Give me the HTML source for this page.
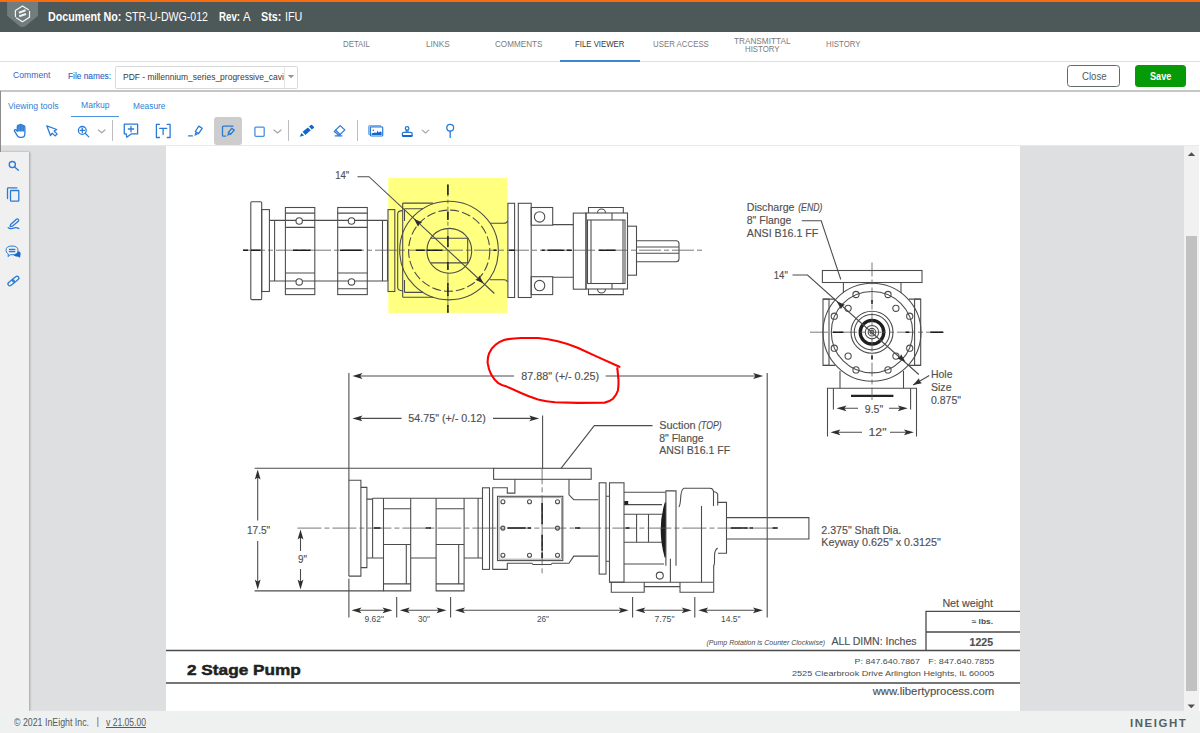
<!DOCTYPE html>
<html lang="en"><head><meta charset="utf-8"><title>Document STR-U-DWG-012 - File Viewer</title>
<style>
*{box-sizing:border-box}
html,body{margin:0;padding:0}
body{width:1200px;height:733px;overflow:hidden;background:#fff;font-family:"Liberation Sans",sans-serif;position:relative}
.t{position:absolute;white-space:nowrap;line-height:1;transform-origin:0 50%}
.abs{position:absolute}
#orange{left:0;top:0;width:1200px;height:2px;background:#f96c10}
#hdr{left:0;top:2px;width:1200px;height:30px;background:#4d5859}
#tabs{left:0;top:32px;width:1200px;height:30px;background:#fff;border-bottom:1px solid #dedede}
#tabline{left:560px;top:60px;width:80px;height:2px;background:#3f86d2}
#frameTop{left:0;top:90px;width:1200px;height:1.9px;background:#c6c6c6}
#frameLeft{left:0;top:91px;width:1px;height:61px;background:#8c8c8c}
#sel{left:115px;top:65.7px;width:182.6px;height:22.9px;border:1.2px solid #d9d9d9;border-radius:1.8px;background:#fff}
#selDiv{left:284.2px;top:66.9px;width:1px;height:21px;background:#e6e6e6}
#btnClose{left:1067px;top:65px;width:53px;height:22px;border:1px solid #5d6b6b;border-radius:3.5px;background:#fff}
#btnSave{left:1134.6px;top:65px;width:51px;height:22px;border-radius:3.5px;background:#069a06}
#mkline{left:71px;top:115.5px;width:48px;height:1.6px;background:#4a92e0}
#tbline{left:0;top:145px;width:1200px;height:1px;background:#e9e9e9}
#selTool{left:213.7px;top:116.8px;width:28.2px;height:28.3px;border-radius:3px;background:#cdcdcd}
.sep{position:absolute;width:1px;top:120.3px;height:21px;background:#bdbdbd}
#viewer{left:0;top:146px;width:1200px;height:565px;background:#dddfe0}
#side{left:0;top:152px;width:28.6px;height:559px;background:#f0f0f0;box-shadow:1px 0 2px rgba(0,0,0,.28)}
#page{left:166px;top:146px;width:854px;height:565.3px;background:#fff}
#sbar{left:1184px;top:146px;width:15px;height:565px;background:#f1f1f1}
#sthumb{left:1186px;top:236px;width:11.3px;height:455px;background:#c1c1c1}
#rstrip{left:1199px;top:92px;width:1px;height:619px;background:#fff}
#foot{left:0;top:711px;width:1200px;height:22px;background:#eff1f1}
svg{position:absolute;left:0;top:0;overflow:visible}
.ln{fill:none;stroke:#4c4c4c;stroke-width:1.08}
.cl{fill:none;stroke:#555;stroke-width:.8}
.cb{stroke:#1c1c1c;stroke-width:1.5}
.ah{fill:#2e2e2e;stroke:none}
.dt{font-family:"Liberation Sans",sans-serif;font-size:10.6px;fill:#505050;stroke:#505050;stroke-width:.15px}
.ds{font-family:"Liberation Sans",sans-serif;font-size:8px;fill:#4a4a4a}
.dm{font-family:"Liberation Sans",sans-serif;font-size:9.2px;fill:#4a4a4a}
.ic{fill:none;stroke:#2b7bd6;stroke-width:1.3;stroke-linecap:round;stroke-linejoin:round}
.icf{fill:#2b7bd6;stroke:none}
.chev{fill:none;stroke:#a6a6a6;stroke-width:1.2;stroke-linecap:round;stroke-linejoin:round}
</style></head>
<body>
<div class="abs" id="orange"></div><div class="abs" id="hdr"></div>
<span class="t" style="left:48.30px;top:10.40px;font-size:13px;color:#fff;transform:scaleX(0.8269);font-weight:700;">Document No:</span>
<span class="t" style="left:125.00px;top:10.40px;font-size:13px;color:#fff;transform:scaleX(0.8150);">STR-U-DWG-012</span>
<span class="t" style="left:219.30px;top:10.40px;font-size:13px;color:#fff;transform:scaleX(0.7453);font-weight:700;">Rev:</span>
<span class="t" style="left:243.40px;top:10.40px;font-size:13px;color:#fff;transform:scaleX(0.8765);">A</span>
<span class="t" style="left:261.30px;top:10.40px;font-size:13px;color:#fff;transform:scaleX(0.8266);font-weight:700;">Sts:</span>
<span class="t" style="left:284.70px;top:10.40px;font-size:13px;color:#fff;transform:scaleX(0.8261);">IFU</span>
<div class="abs" id="tabs"></div><div class="abs" id="tabline"></div>
<span class="t" style="left:343.20px;top:39.34px;font-size:9.4px;color:#7b7b7b;transform:scaleX(0.8351);">DETAIL</span>
<span class="t" style="left:426.10px;top:39.34px;font-size:9.4px;color:#7b7b7b;transform:scaleX(0.8761);">LINKS</span>
<span class="t" style="left:495.20px;top:39.34px;font-size:9.4px;color:#7b7b7b;transform:scaleX(0.8663);">COMMENTS</span>
<span class="t" style="left:575.20px;top:39.34px;font-size:9.4px;color:#3a3a3a;transform:scaleX(0.8330);">FILE VIEWER</span>
<span class="t" style="left:652.80px;top:39.34px;font-size:9.4px;color:#7b7b7b;transform:scaleX(0.8375);">USER ACCESS</span>
<span class="t" style="left:734.10px;top:35.94px;font-size:9.4px;color:#7b7b7b;transform:scaleX(0.8764);">TRANSMITTAL</span>
<span class="t" style="left:744.50px;top:43.94px;font-size:9.4px;color:#7b7b7b;transform:scaleX(0.8373);">HISTORY</span>
<span class="t" style="left:825.90px;top:39.34px;font-size:9.4px;color:#7b7b7b;transform:scaleX(0.8349);">HISTORY</span>
<span class="t" style="left:12.90px;top:69.74px;font-size:9.4px;color:#3d5fc2;transform:scaleX(0.9204);">Comment</span>
<span class="t" style="left:67.70px;top:71.58px;font-size:9px;color:#2a60c8;transform:scaleX(0.9244);-webkit-text-stroke:.1px #2a60c8;">File names:</span>
<div class="abs" id="sel"></div><div class="abs" id="selDiv"></div>
<span class="t" style="left:123.00px;top:72.04px;font-size:9.4px;color:#3a3a3a;transform:scaleX(0.9049);">PDF - millennium_series_progressive_cavi</span>
<div class="abs" id="btnClose"></div><div class="abs" id="btnSave"></div>
<span class="t" style="left:1081.60px;top:72.03px;font-size:10px;color:#4d5b5b;transform:scaleX(0.9622);">Close</span>
<span class="t" style="left:1149.60px;top:72.03px;font-size:10px;color:#fff;transform:scaleX(0.9163);font-weight:700;">Save</span>
<div class="abs" id="frameTop"></div>
<span class="t" style="left:8.00px;top:101.61px;font-size:9.2px;color:#2f7fd3;transform:scaleX(0.9382);">Viewing tools</span>
<span class="t" style="left:80.70px;top:100.61px;font-size:9.2px;color:#2f7fd3;transform:scaleX(0.9323);">Markup</span>
<span class="t" style="left:133.00px;top:101.61px;font-size:9.2px;color:#2f7fd3;transform:scaleX(0.9080);">Measure</span>
<div class="abs" id="mkline"></div><div class="abs" id="selTool"></div>
<div class="sep" style="left:112.2px"></div>
<div class="sep" style="left:288.3px"></div>
<div class="sep" style="left:357.2px"></div>
<div class="abs" id="tbline"></div>
<div class="abs" id="viewer"></div><div class="abs" id="page"></div><div class="abs" id="side"></div>
<div class="abs" id="sbar"></div><div class="abs" id="sthumb"></div><div class="abs" id="rstrip"></div>
<div class="abs" id="frameLeft"></div>
<div class="abs" id="foot"></div>
<span class="t" style="left:14.00px;top:717.53px;font-size:10px;color:#555b5b;transform:scaleX(0.8803);">© 2021 InEight Inc.</span>
<span class="t" style="left:96.50px;top:717.13px;font-size:10px;color:#8a5a6a;transform:scaleX(1.0000);">|</span>
<span class="t" style="left:105.50px;top:717.53px;font-size:10px;color:#555b5b;transform:scaleX(0.8564);text-decoration:underline;">v 21.05.00</span>
<span class="t" style="left:1130.00px;top:718.60px;font-size:10.4px;color:#566060;transform:scaleX(1.1043);font-weight:700;letter-spacing:1.4px;">INEIGHT</span>
<svg width="1200" height="733" viewBox="0 0 1200 733">
<!-- ===== HEADER LOGO ===== -->
<path d="M7.1 2H38V15.8L25.6 25.9Q22.5 28.2 19.4 25.9L7.1 15.8Z" fill="#707c7d"/>
<g fill="none" stroke="#f4f6f6" stroke-width="1.25" stroke-linecap="round" stroke-linejoin="round">
<path d="M28.4 9.7L22.45 6L15.4 10.5V16.5M16.5 18L22.45 21.7L29.5 17.2V11.3"/>
<path d="M18.9 12.7L25.6 10.3M19.2 16.3L26 14.1" stroke-width="2.1" stroke-linecap="butt" stroke="#eef1f1"/>
</g>
<!-- ===== SELECT ARROW ===== -->
<path d="M287.8 75H294.2L291 78.3Z" fill="#959595"/>
<!-- ===== TOOLBAR ICONS ===== -->
<!-- hand -->
<path d="M17.3 125.6H24.9V131H17.3Z" fill="#2b7bd6" fill-opacity=".38"/>
<path class="ic" d="M17.3 131.2V126.5Q17.3 125.3 18.6 125.2L19.5 124.7Q20.3 124.2 21 124.6L23.6 125.6Q24.9 126 24.9 127.3V133.5Q24.9 137.4 21.5 137.4H20Q18.2 137.4 17.3 135.6L14.4 130.9Q14.2 129.9 15.1 129.6Q15.8 129.4 16.3 130.1Z" stroke-width="1.15"/>
<path class="ic" d="M18.8 125.6V131M20.3 124.8V131M21.8 125.2V131M23.3 125.8V131" stroke-width=".7"/>
<!-- cursor -->
<path class="ic" d="M46.8 125.8L56.7 129.5L54.1 131L57.2 134.1L55 135.9L52.2 133.1L50.5 135.6Z" stroke-width="1.15"/>
<!-- zoom -->
<circle class="ic" cx="82.3" cy="130.4" r="3.9" stroke-width="1.1"/>
<path class="ic" d="M85.2 133.3L88.8 136.9" stroke-width="1.3"/>
<path class="ic" d="M80.3 130.4H84.4" stroke-width="1.4" stroke="#1a6bd3"/>
<path class="ic" d="M82.3 128.2V132.6" stroke-width=".6"/>
<path class="chev" d="M98.4 130L101.7 132.8L104.9 130"/>
<!-- comment plus -->
<path class="ic" d="M124.3 124.2H137.6V133.9H131.2L126.7 137.2L126.3 133.9H124.3Z"/>
<path class="ic" d="M128.3 129H133.7M131 126.3V131.7" stroke="#1a6bd3" stroke-width="1.5" stroke-linecap="butt"/>
<!-- [T] -->
<path class="ic" d="M159.5 124.4H156.4V137.5H159.5M167.2 124.4H170.1V137.5H167.2" stroke-linecap="butt" stroke-linejoin="miter"/>
<path class="ic" d="M159.6 128.3H166.8M163.1 128.3V134.6" stroke="#1565d0" stroke-width="1.9" stroke-linecap="butt"/>
<!-- highlighter -->
<path class="ic" d="M188.6 135.9H192.4" stroke-width="1.4" stroke-linecap="butt"/>
<path class="ic" d="M198.8 126.1L202.2 128.3L198.6 133.6L195.3 131.5Z" stroke-width="1.1"/>
<path class="icf" d="M195.2 132.3L198.1 134.2L194.4 135.9Z"/>
<!-- selected: note w/ pen -->
<path class="ic" d="M233 126.1H223.4Q222.5 126.1 222.5 127V135.2Q222.5 136.1 223.4 136.1H225.7" stroke-width="1.2"/>
<path class="ic" d="M231.7 128.3L234.3 130L230.6 134.2L228.3 132.5Z" stroke-width="1.1"/>
<path class="icf" d="M228.1 132.7L230.3 134.5L227 135.9Z"/>
<!-- rectangle -->
<rect x="254.9" y="127.1" width="9.3" height="9.2" rx="1" fill="#fff" stroke="#4a8fe0" stroke-width="1.3"/>
<path class="chev" d="M274 130L277.5 133L281 130"/>
<!-- pencil (filled) -->
<g fill="#0f65d0">
<path d="M299.7 136.8L301.5 133L304.1 135.6Z"/>
<path d="M302.6 131.8L307.9 127.5L310.7 130.3L305.4 134.9Z"/>
<path d="M309 126.6L310.9 125Q311.6 124.5 312.3 125.2L313.8 126.7Q314.4 127.4 313.8 128L311.8 129.5Z"/>
</g>
<!-- eraser -->
<path class="ic" d="M340.2 125.6L344.8 129.9L339 135.6L334.3 131.4Z" stroke-width="1.1"/>
<path class="ic" d="M335.6 130.2L340.2 134.4" stroke-width="1"/>
<path class="ic" d="M335.2 135.8H342" stroke-width="1.3" stroke-linecap="butt"/>
<!-- image -->
<rect x="368.6" y="125.6" width="12.6" height="9.2" rx=".8" fill="#a6c9ef" stroke="#5b9be3" stroke-width=".8"/>
<rect x="370.5" y="127" width="12.2" height="9" rx=".8" fill="#fff" stroke="#2b7bd6" stroke-width="1.2"/>
<path d="M371.6 134.9V133.6L374.8 132.4L376.6 133L377.4 130.4L378.6 132.6L380.4 131.4L381.6 132V134.9Z" fill="#1565d0"/>
<circle cx="373.3" cy="130.3" r=".8" fill="#1565d0"/>
<!-- stamp -->
<circle class="ic" cx="407.1" cy="128.4" r="1.8" stroke-width="1.1"/>
<path class="ic" d="M406.3 130.2V132.3M407.9 130.2V132.3" stroke-width=".9"/>
<path class="ic" d="M402.4 135.2V133.4Q402.4 132.3 403.5 132.3H411Q412.1 132.3 412.1 133.4V135.2" stroke-width="1.1"/>
<path d="M402 135H412.6V136Q412.6 136.9 411.6 136.9H403Q402 136.9 402 136Z" fill="#1565d0"/>
<path class="chev" d="M422.2 130.1L425.5 133L428.8 130.1"/>
<!-- pin -->
<circle class="ic" cx="450.2" cy="127.8" r="3.4" stroke-width="1.2" stroke="#3f88dd"/>
<path class="ic" d="M450.2 131.2V137.6" stroke-width="1.2" stroke="#3f88dd"/>
<!-- ===== SIDEBAR ICONS ===== -->
<circle class="ic" cx="12.3" cy="164.6" r="3.1" stroke-width="1.1"/>
<path class="ic" d="M14.6 166.9L18.4 170.3" stroke-width="1.2"/>
<path class="ic" d="M16.8 187.9H8.3Q7.5 187.9 7.5 188.7V198.5" stroke-width="1" stroke="#4a8fe0"/>
<rect class="ic" x="10.5" y="190.5" width="8.3" height="10.6" rx=".6" stroke-width="1.2"/>
<path class="ic" d="M10.6 224.4L16.4 219.2Q17.4 218.5 18.3 219.4Q19.1 220.4 18.3 221.3L12.4 226.2L10.2 226.6Z" stroke-width="1"/>
<path class="ic" d="M8.2 227.6Q9.5 229.2 12.5 228.3Q16.5 226.8 18.8 228.6" stroke-width="1"/>
<path d="M14 252.5Q17.5 251 19.6 251.6Q21.2 253.5 20.3 255.5L20 257.8L17.8 256.6Q15.5 256.8 13.8 255.5Z" fill="#1565d0"/>
<path d="M12 246Q18 246 18 250.4Q18 254.8 12 254.8Q11 254.8 10.3 254.7L8 256.6L8.4 254Q6 252.8 6 250.4Q6 246 12 246Z" fill="#f0f0f0" stroke="#2b7bd6" stroke-width="1"/>
<path class="ic" d="M9.4 249.4H14.8M9.4 251.5H14.8" stroke-width=".8"/>
<g class="ic" stroke-width="1.2">
<rect x="-3.6" y="-1.9" width="7.2" height="3.8" rx="1.9" transform="translate(11.2 282.8) rotate(-39)"/>
<rect x="-3.6" y="-1.9" width="7.2" height="3.8" rx="1.9" transform="translate(15.6 279.2) rotate(-39)"/>
</g>
<!-- scrollbar arrows -->
<path d="M1187.8 156L1191.5 152.2L1195.2 156Z" fill="#505050"/>
<path d="M1187.6 704.5L1191.3 708.3L1195 704.5Z" fill="#505050"/>

<!-- ===== TOP VIEW (upper-left drawing) ===== -->
<rect x="388.3" y="177.9" width="118.8" height="135" fill="#ffff80" stroke="none"/>
<g class="ln">
<!-- left flange + step -->
<rect x="250.8" y="201.7" width="10.9" height="97.9" rx="1"/>
<rect x="261.7" y="209.6" width="7.7" height="81.9"/>
<!-- shaft tube -->
<path d="M269.4 220.4H387.5M269.4 281H387.5M274.6 220.4V281M382.5 220.4V281M387.5 220.4V281"/>
<!-- bearing blocks -->
<rect x="285.4" y="207.5" width="29.4" height="87.1"/>
<path d="M285.4 213.1H314.8M285.4 288.8H314.8M285.4 227.4H314.8M285.4 273H314.8"/>
<circle cx="299.2" cy="221" r="3.2" fill="#fff"/><circle cx="299.2" cy="281.9" r="3.2" fill="#fff"/>
<rect x="337.7" y="207.5" width="29.6" height="87.1"/>
<path d="M337.7 213.1H367.3M337.7 288.8H367.3M337.7 227.4H367.3M337.7 273H367.3"/>
<circle cx="351.5" cy="221" r="3.2" fill="#fff"/><circle cx="351.5" cy="281.9" r="3.2" fill="#fff"/>
<!-- plate before housing -->
<rect x="388" y="209.6" width="6.8" height="81.9"/>
<!-- housing left -->
<path d="M402.7 203.1H433M402.7 297.2H433M402.7 203.1V297.2M404.5 208.8H423M404.5 292.4H423M404.5 208.8V221M404.5 280V292.4"/>
<path d="M402.5 210.6Q397.7 210.6 397.7 214V287Q397.7 290.8 402.5 290.8"/>
<!-- circles -->
<circle cx="449" cy="250.6" r="49.3"/>
<circle cx="449.2" cy="250.7" r="40.6" stroke-dasharray="9 3"/>
<circle cx="449.3" cy="250.8" r="22.4"/>
<path d="M431 238.3H467.7V262.9H431"/>
<!-- outlet nubs -->
<path d="M490 223.2H504Q507 223.2 507.6 220.8M490 279.7H504Q507 279.7 507.6 282.2"/>
<!-- plates right of housing -->
<rect x="507.9" y="203.3" width="6.7" height="94.2"/>
<rect x="518.3" y="203.3" width="12.9" height="94.2"/>
<!-- lugs -->
<rect x="531.2" y="207.5" width="21.5" height="17.7"/><circle cx="539.6" cy="216.9" r="5.2"/>
<rect x="531.2" y="276.7" width="21.5" height="17.9"/><circle cx="539.6" cy="285.6" r="5.2"/>
<path d="M552.7 224.6H573.3M552.7 277.3H573.3"/>
<rect x="573.3" y="213.1" width="12.7" height="76.1"/>
<!-- gearbox -->
<rect x="586" y="213" width="41.5" height="76"/>
<rect x="587.5" y="220" width="37.5" height="63.5"/>
<path d="M591 220V283.5M623 220V283.5"/>
<path d="M588.5 213V207.5H623.3V213M588.5 289V294.6H623.3V289"/>
<path d="M612 213V220M612 283.5V289"/>
<path d="M597.5 213A4 4 0 0 1 605.5 213M597.5 289A4 4 0 0 0 605.5 289"/>
<rect x="627.5" y="226.2" width="9" height="49"/>
<path d="M636.5 240.8H676Q679 240.8 679 243.8V258.7Q679 261.7 676 261.7H636.5M636.5 247H679M636.5 253.3H679"/>
</g>
<g class="cl">
<path d="M243 250.2H705" stroke-dasharray="22 3 5 3"/>
<path class="cb" d="M243 250.2H248M251 250.2H260.6M293 250.2H310.6M339.8 250.2H361.7M415.8 250.2H424.8M427 250.2H442.5M493.5 250.2H496.7M509 250.2H514.6M541.7 250.2H544.8M547.5 250.2H564.6M566.7 250.2H571.9M599 250.2H615.6"/>
<path d="M447.9 184.6V312.7" stroke-dasharray="12 3 4 3"/>
<path class="cb" d="M447.9 184.6V195M447.9 211.7V220M447.9 236V247M447.9 262V270M447.9 283V296M447.9 305V312.7"/>
</g>
<!-- 14" leader -->
<g class="ln"><path d="M357.5 176.7H369L494.4 293.5"/></g>
<text class="dt" x="335.2" y="179.4" textLength="14" lengthAdjust="spacingAndGlyphs">14"</text>

<!-- ===== DISCHARGE END VIEW ===== -->
<g class="ln">
<rect x="822.4" y="270.5" width="99.6" height="12"/>
<path d="M843.4 282.5V293M901 282.5V293"/>
<rect x="823" y="299.1" width="6" height="66.3"/><rect x="914.6" y="299.1" width="6.1" height="66.3"/>
<path d="M823 299.1H835M823 365.4H835M920.7 299.1H909M920.7 365.4H909"/>
<circle cx="872" cy="332.2" r="49"/>
<circle cx="872" cy="332.2" r="40.7"/>
<circle cx="909.7" cy="348.2" r="3.1"/><circle cx="888.0" cy="369.9" r="3.1"/><circle cx="856.0" cy="369.9" r="3.1"/><circle cx="834.3" cy="348.2" r="3.1"/><circle cx="834.3" cy="316.2" r="3.1"/><circle cx="856.0" cy="294.5" r="3.1"/><circle cx="888.0" cy="294.5" r="3.1"/><circle cx="909.7" cy="316.2" r="3.1"/><circle cx="895.9" cy="356.1" r="3.1"/><circle cx="848.1" cy="356.1" r="3.1"/><circle cx="848.1" cy="308.3" r="3.1"/><circle cx="895.9" cy="308.3" r="3.1"/>
<circle cx="872" cy="332.2" r="21"/>
<circle cx="872" cy="332.2" r="17.7"/>
<circle cx="872" cy="332.2" r="11.8" stroke-width="3.3" stroke="#1e1e1e"/>
<circle cx="872" cy="332.2" r="6.7"/>
<circle cx="872" cy="332.2" r="3.8"/>
<circle cx="872" cy="332.2" r="1.8"/>
<path d="M840 371V388.3M903.5 371V388.3"/>
<path d="M827.5 398V388.3H916.5V398"/>
<path d="M833.4 388.3V409.5M910.6 388.3V409.5M827.5 398V436.5M916.5 398V436.5"/>
<path d="M851 395.9H893.4" stroke-width="2.2" stroke="#222"/>
<!-- dims -->
<path d="M842 408.3H858M889 408.3H902"/>
<path d="M836 432.3H862M890 432.3H908"/>
<!-- leaders -->
<path d="M801.8 220.8H821.2L840.8 279.5"/>
<path d="M792.5 275H807.5L918.8 374.5"/>
<path d="M929.3 375.5L913.1 385"/>
</g>
<g class="cl">
<path d="M810 332.2H944" stroke-dasharray="18 3 5 3"/>
<path class="cb" d="M832.9 332.2H843.4M905.5 332.2H909.3M930.3 332.2H943"/>
<path d="M872 262.5V400" stroke-dasharray="14 3 5 3"/>
<path class="cb" d="M872 355.5V359.5M872 300V304"/>
</g>
<text class="dt" x="746.8" y="211" textLength="47.7" lengthAdjust="spacingAndGlyphs">Discharge</text>
<text class="dt" x="798.2" y="211" textLength="24.2" lengthAdjust="spacingAndGlyphs" font-style="italic">(END)</text>
<text class="dt" x="746.8" y="223.8" textLength="44.5" lengthAdjust="spacingAndGlyphs">8" Flange</text>
<text class="dt" x="746.8" y="236.8" textLength="71.5" lengthAdjust="spacingAndGlyphs">ANSI B16.1 FF</text>
<text class="dt" x="773.8" y="278.8" textLength="14" lengthAdjust="spacingAndGlyphs">14"</text>
<text class="dt" x="864.8" y="412.7" textLength="18.4" lengthAdjust="spacingAndGlyphs">9.5"</text>
<text class="dt" x="868.5" y="436.3" textLength="18" lengthAdjust="spacingAndGlyphs">12"</text>
<text class="dt" x="931" y="378.3" textLength="21.5" lengthAdjust="spacingAndGlyphs">Hole</text>
<text class="dt" x="931" y="391.3" textLength="20.5" lengthAdjust="spacingAndGlyphs">Size</text>
<text class="dt" x="931" y="404.1" textLength="30" lengthAdjust="spacingAndGlyphs">0.875"</text>

<!-- ===== MAIN SIDE VIEW ===== -->
<g class="ln">
<!-- overall dim ext lines -->
<path d="M348.9 373V576.1M348.9 578.7V617.6M767.2 373V617.5M542.6 415.5V468.3"/>
<path d="M358 376H514M605.6 376H758"/>
<path d="M358 418.4H401.6M493 418.4H534"/>
<!-- height dims -->
<path d="M254.6 468.3H493.6M254.6 590.9H383.5"/>
<path d="M257.7 475V520.4M257.7 541V584M300.5 535V551M300.5 569V584"/>
<!-- left flange -->
<path d="M348.8 480.2H360.9V576.1H348.8"/>
<path d="M360.9 487.4H366.9V567.6H360.9"/>
<path d="M366.9 499.1H372.6M366.9 558H372.6"/>
<!-- main tube -->
<path d="M372.6 498.3H482.5M372.6 558H383.5M410.7 558H436.1M464.1 558H482.5M372.6 498.3V558M478.1 498.3V558"/>
<!-- support 1 -->
<path d="M383.5 498.3V590.9H410.7V498.3M383.5 508.7H410.7M383.5 544.5H410.7M383.5 583.9H410.7M406.3 544.5V583.9"/>
<!-- support 2 -->
<path d="M436.1 498.3V590.9H464.1V498.3M436.1 508.7H464.1M436.1 544.5H464.1M436.1 583.9H464.1M458.7 544.5V583.9"/>
<!-- plate -->
<rect x="482.5" y="487.8" width="7" height="81.6"/>
<!-- pump housing -->
<path d="M492.7 569.4V487.8H507.3V493.1H514.9V479.3"/>
<path d="M492.7 569.4H507.3V563.2H531.8L533 564.5H551L552.2 563.2H569L573.8 556.1H598.3"/>
<rect x="493.6" y="468.3" width="97.6" height="11"/>
<path d="M569 479.3V494.9L573.8 499.7H598.3"/>
<rect x="497.5" y="496.3" width="65.3" height="64.3"/>
<rect x="499" y="497.8" width="62.3" height="61.3" stroke-width=".5"/>
<circle cx="502.9" cy="501.7" r="2"/><circle cx="529.5" cy="501.7" r="2"/><circle cx="557.5" cy="501.7" r="2"/>
<circle cx="502.9" cy="528.1" r="2"/><circle cx="557.5" cy="528.1" r="2"/>
<circle cx="502.9" cy="555.2" r="2"/><circle cx="529.5" cy="555.2" r="2"/><circle cx="557.5" cy="555.2" r="2"/>
<!-- plate 2 -->
<rect x="599.2" y="482.8" width="6.8" height="91.3"/>
<path d="M606 496.2H609.5M606 561.3H609.5"/>
<!-- adapter -->
<rect x="609.5" y="482.8" width="14.5" height="99.4"/>
<path d="M624 492.2H665.4M624 504.6H662M624 514.3H662M624 542.2H662M624 564H664M636.6 514.3V542.2M648.5 514.3V542.2"/>
<rect x="624.3" y="501" width="3.9" height="3.8" fill="#222" stroke="none"/>
<path d="M665.4 502.8Q657.4 529 665.2 557Z" fill="#1e1e1e" stroke="#1e1e1e" stroke-width="1.3" stroke-linejoin="round"/>
<!-- motor flange -->
<path d="M665.9 565.7V490.9H676V565.7"/>
<path d="M670.4 558.7V582.1"/>
<circle cx="659.8" cy="575.6" r="3.5"/>
<!-- motor body -->
<path d="M678.7 507Q680 506 680.5 500Q680.8 489.5 684 488.3H710Q713.2 488.5 713.5 491.5Q716.8 492 717.7 494V505.5"/>
<path d="M713.5 491.5V506M701.5 506.1V582.1"/>
<path d="M718 502.4H726.5V553.3H718M717.7 548Q714.5 550 714.5 556V562Q714.5 565 713.7 565.5V582.1"/>
<path d="M609.5 582.2H713.7"/>
<path d="M611.3 582.2V592.2H644.2V582.2M680 582.2V592.2H713.7V582.2M644.2 586.6H680"/>
<!-- shaft -->
<path d="M726.5 517.6H808.9V539H726.5"/>
<!-- bottom dims -->
<path d="M396.7 597V617.6M450.6 597V617.6M632.6 597V617.6M694.8 597V617.6"/>
<path d="M357 610.3H387M405 610.3H441M460 610.3H623M641 610.3H686M704 610.3H757"/>
<!-- suction leader -->
<path d="M561 468.3L594.3 425.6H652.5"/>
</g>
<g class="cl">
<path d="M297.4 528.1H777.8" stroke-dasharray="24 3 5 3"/>
<path class="cb" d="M373.9 528.1H380.4M425.7 528.1H431M507.4 528.1H525.7M527.6 528.1H531M575 528.1H580.2M625.6 528.1H629.5M730.8 528.1H747.5M749.5 528.1H753M772.6 528.1H777.8"/>
<path d="M542.1 468.3V576" stroke-dasharray="16 3 5 3"/>
<path class="cb" d="M542.1 502.9V524.2M542.1 534.8V550.8M542.1 552.4V557.9"/>
</g>
<!-- arrowheads -->
<!-- text -->
<text class="dt" x="521.3" y="379.6" textLength="77.9" lengthAdjust="spacingAndGlyphs">87.88" (+/- 0.25)</text>
<text class="dt" x="408.3" y="422.2" textLength="77.5" lengthAdjust="spacingAndGlyphs">54.75" (+/- 0.12)</text>
<text class="dt" x="659.2" y="429.4" textLength="36.4" lengthAdjust="spacingAndGlyphs">Suction</text>
<text class="dt" x="698.2" y="429.4" textLength="23.6" lengthAdjust="spacingAndGlyphs" font-style="italic">(TOP)</text>
<text class="dt" x="659.2" y="441.9" textLength="44.5" lengthAdjust="spacingAndGlyphs">8" Flange</text>
<text class="dt" x="659.2" y="454.4" textLength="71" lengthAdjust="spacingAndGlyphs">ANSI B16.1 FF</text>
<text class="dt" x="246.9" y="533.9" textLength="23.3" lengthAdjust="spacingAndGlyphs">17.5"</text>
<text class="dt" x="298" y="563.2" textLength="9" lengthAdjust="spacingAndGlyphs">9"</text>
<text class="dt" x="821.3" y="533.6" textLength="80" lengthAdjust="spacingAndGlyphs">2.375" Shaft Dia.</text>
<text class="dt" x="821.3" y="545.8" textLength="119.5" lengthAdjust="spacingAndGlyphs">Keyway 0.625" x 0.3125"</text>
<text class="dm" x="364.5" y="621.8" textLength="19.5" lengthAdjust="spacingAndGlyphs">9.62"</text>
<text class="dm" x="418" y="621.8" textLength="12" lengthAdjust="spacingAndGlyphs">30"</text>
<text class="dm" x="537" y="621.8" textLength="12" lengthAdjust="spacingAndGlyphs">26"</text>
<text class="dm" x="654.5" y="621.8" textLength="20" lengthAdjust="spacingAndGlyphs">7.75"</text>
<text class="dm" x="721" y="621.8" textLength="19.5" lengthAdjust="spacingAndGlyphs">14.5"</text>

<!-- arrowheads -->
<path class="ah" d="M352.4 376.0L362.4 373.1L360.2 376.0L362.4 378.9ZM763.2 376.0L753.2 378.9L755.4 376.0L753.2 373.1ZM352.4 418.4L362.4 415.5L360.2 418.4L362.4 421.3ZM539.2 418.4L529.2 421.3L531.4 418.4L529.2 415.5ZM257.7 469.6L260.6 479.6L257.7 477.4L254.8 479.6ZM257.7 589.6L254.8 579.6L257.7 581.8L260.6 579.6ZM300.5 529.6L303.4 539.6L300.5 537.4L297.6 539.6ZM300.5 589.6L297.6 579.6L300.5 581.8L303.4 579.6ZM351.5 610.3L361.5 607.4L359.3 610.3L361.5 613.2ZM392.5 610.3L382.5 613.2L384.7 610.3L382.5 607.4ZM399.8 610.3L409.8 607.4L407.6 610.3L409.8 613.2ZM446.5 610.3L436.5 613.2L438.7 610.3L436.5 607.4ZM455.0 610.3L465.0 607.4L462.8 610.3L465.0 613.2ZM628.7 610.3L618.7 613.2L620.9 610.3L618.7 607.4ZM635.4 610.3L645.4 607.4L643.2 610.3L645.4 613.2ZM691.7 610.3L681.7 613.2L683.9 610.3L681.7 607.4ZM698.2 610.3L708.2 607.4L706.0 610.3L708.2 613.2ZM763.0 610.3L753.0 613.2L755.2 610.3L753.0 607.4ZM836.5 408.3L846.5 405.4L844.3 408.3L846.5 411.2ZM907.8 408.3L897.8 411.2L900.0 408.3L897.8 405.4ZM830.4 432.3L840.4 429.4L838.2 432.3L840.4 435.2ZM913.9 432.3L903.9 435.2L906.1 432.3L903.9 429.4Z"/>
<path class="ah" d="M836.6 301.3L844.9 304.8L842.2 306.4L841.0 309.2ZM905.5 362.1L897.2 358.6L899.9 357.0L901.1 354.2ZM913.1 385.0L919.0 378.2L919.7 381.2L921.9 383.2ZM413.9 218.8L422.1 222.5L419.4 224.0L418.1 226.7ZM483.6 283.4L475.4 279.7L478.1 278.2L479.4 275.5Z"/>

<!-- ===== TITLE BLOCK ===== -->
<g stroke="#4a4a4a" fill="none">
<path d="M166 650.5H1020M166 683H1020" stroke-width="1.6"/>
<path d="M926 650.5V611.3H1020M926 632H1020" stroke-width="1.3"/>
</g>
<text x="187" y="675" textLength="113.8" lengthAdjust="spacingAndGlyphs" font-family="'Liberation Sans',sans-serif" font-weight="bold" font-size="15.4" fill="#231f20" stroke="#231f20" stroke-width="0.5">2 Stage Pump</text>
<text class="dt" x="942.4" y="607" textLength="50.6" lengthAdjust="spacingAndGlyphs">Net weight</text>
<text class="ds" x="971.7" y="624.4" textLength="21.3" lengthAdjust="spacingAndGlyphs" style="font-weight:bold;font-size:6.6px">≈ lbs.</text>
<text class="dt" x="969.6" y="646" textLength="23.4" lengthAdjust="spacingAndGlyphs" font-weight="bold" fill="#222">1225</text>
<text class="ds" x="706.5" y="644.6" textLength="118.7" lengthAdjust="spacingAndGlyphs" style="font-style:italic;font-size:7.8px">(Pump Rotation is Counter Clockwise)</text>
<text class="dt" x="831.5" y="644.6" textLength="85" lengthAdjust="spacingAndGlyphs">ALL DIMN: Inches</text>
<text class="ds" x="854.6" y="663.8" textLength="65.4" lengthAdjust="spacingAndGlyphs">P: 847.640.7867</text>
<text class="ds" x="928.3" y="663.8" textLength="66" lengthAdjust="spacingAndGlyphs">F: 847.640.7855</text>
<text class="ds" x="792" y="676" textLength="202.3" lengthAdjust="spacingAndGlyphs">2525 Clearbrook Drive Arlington Heights, IL 60005</text>
<text class="dt" x="872.7" y="694.5" textLength="121.6" lengthAdjust="spacingAndGlyphs" style="font-size:11.3px">www.libertyprocess.com</text>
<!-- red freehand markup -->
<path d="M619.4 366.8L597.5 356.9L577.6 347.7Q567 343.5 557.8 341.3Q548 338.8 538 338H521Q511 338.3 504 339.9Q498.5 341.8 495.5 344.8Q491 348.5 489.1 353.3Q487.3 358 487.7 363.2Q488.5 369.5 491.2 374.6Q494 379.8 498.3 383.1Q502 385.5 506.8 386.6L521 393Q529 396.7 538 399.4Q546 401.5 555 402.2L577.6 402.9L604.6 402.6Q609.8 401.5 613 398.7Q616.5 395 618 390.2Q618.8 384.5 618.4 378.8L617.3 368.2" fill="none" stroke="#f00" stroke-width="2.1" stroke-linejoin="round" stroke-linecap="round"/>

</svg>
</body></html>
